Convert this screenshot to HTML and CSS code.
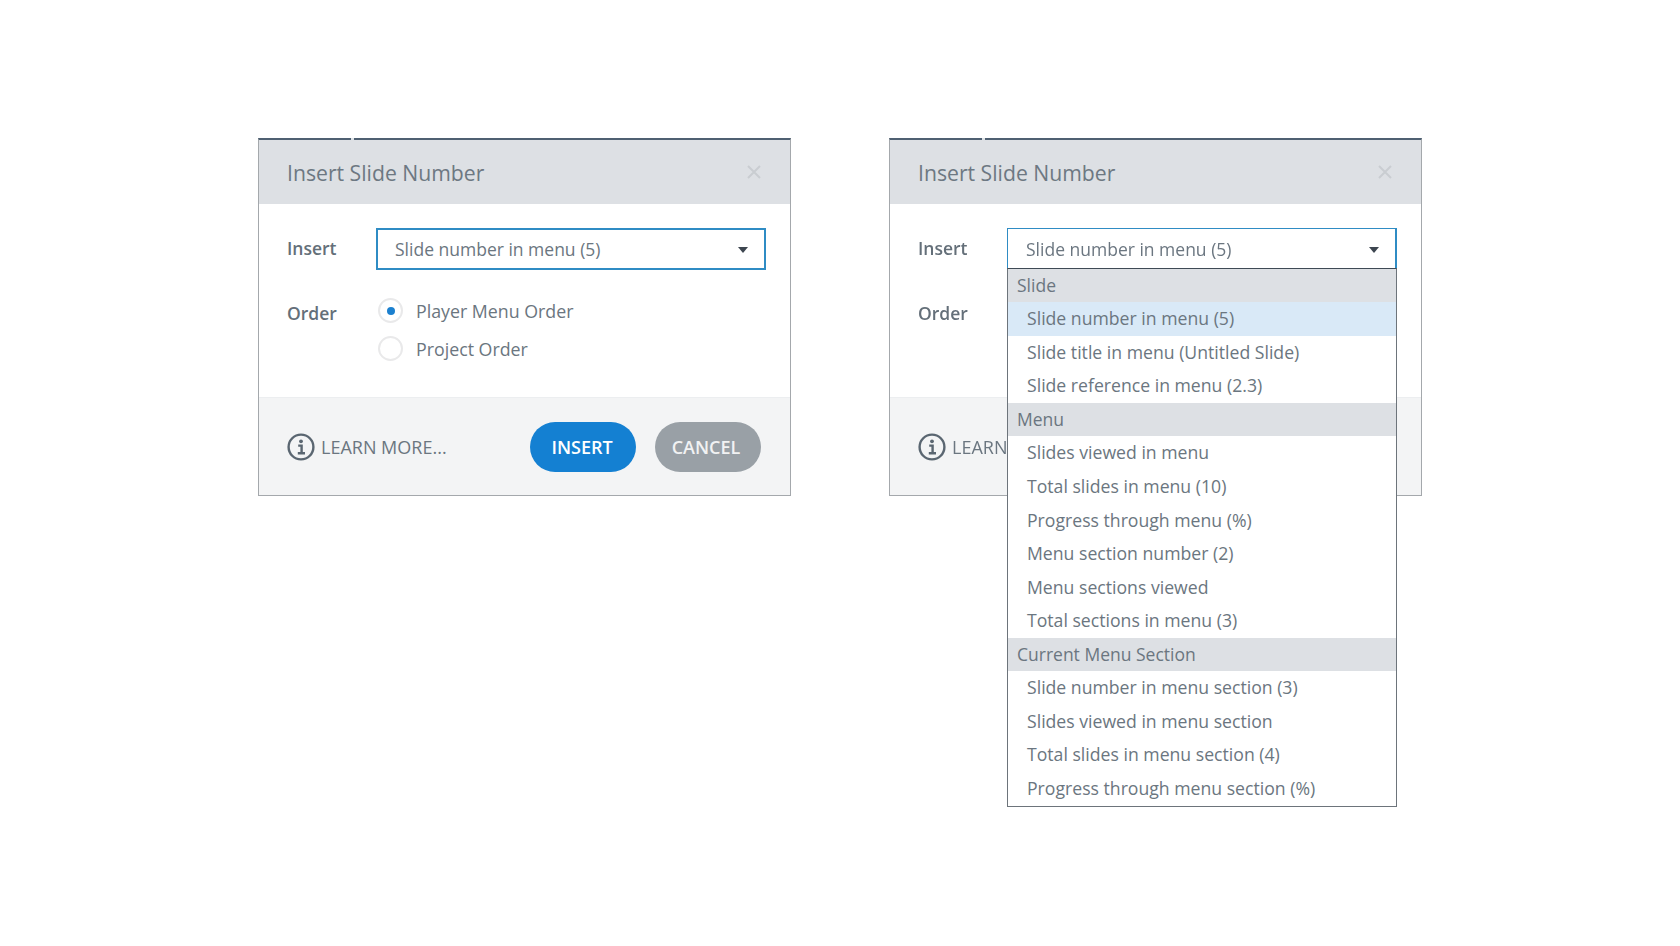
FILE: index.html
```html
<!DOCTYPE html>
<html lang="en">
<head>
  <meta charset="UTF-8">
  <title>Insert Slide Number</title>
  <link rel="stylesheet" href="styles.css">
</head>
<body>
  <div class="page">
    <!-- closed state -->
    <div class="dialog">
      <div class="dialog-head">
        <span class="dialog-title">Insert Slide Number</span>
        <svg class="close" width="14" height="14" viewBox="0 0 14 14"><path d="M1 1l12 12M13 1L1 13"/></svg>
      </div>
      <div class="dialog-body">
        <div class="row">
          <span class="label">Insert</span>
          <div class="select">
            <span>Slide number in menu (5)</span>
            <span class="caret"></span>
          </div>
        </div>
        <div class="row order-row">
          <span class="label">Order</span>
          <div class="radios">
            <div class="radio-row"><span class="radio checked"></span>Player Menu Order</div>
            <div class="radio-row"><span class="radio"></span>Project Order</div>
          </div>
        </div>
      </div>
      <div class="dialog-foot">
        <div class="learn">
          <svg class="info" width="28" height="28" viewBox="0 0 28 28"><circle cx="14" cy="14" r="12.4"/><path d="M11.2 12.6h3.4v7.6M10.8 20.2h7.2"/><circle class="dot" cx="14" cy="8.3" r="1.9"/></svg>
          <span>LEARN MORE...</span>
        </div>
        <div class="actions">
          <button class="btn insert">INSERT</button>
          <button class="btn cancel">CANCEL</button>
        </div>
      </div>
    </div>

    <!-- open state -->
    <div class="dialog">
      <div class="dialog-head">
        <span class="dialog-title">Insert Slide Number</span>
        <svg class="close" width="14" height="14" viewBox="0 0 14 14"><path d="M1 1l12 12M13 1L1 13"/></svg>
      </div>
      <div class="dialog-body">
        <div class="row">
          <span class="label">Insert</span>
          <div class="select open">
            <span>Slide number in menu (5)</span>
            <span class="caret"></span>
            <div class="menu">
              <div class="group">Slide</div>
              <div class="item active">Slide number in menu (5)</div>
              <div class="item">Slide title in menu (Untitled Slide)</div>
              <div class="item">Slide reference in menu (2.3)</div>
              <div class="group">Menu</div>
              <div class="item">Slides viewed in menu</div>
              <div class="item">Total slides in menu (10)</div>
              <div class="item">Progress through menu (%)</div>
              <div class="item">Menu section number (2)</div>
              <div class="item">Menu sections viewed</div>
              <div class="item">Total sections in menu (3)</div>
              <div class="group">Current Menu Section</div>
              <div class="item">Slide number in menu section (3)</div>
              <div class="item">Slides viewed in menu section</div>
              <div class="item">Total slides in menu section (4)</div>
              <div class="item">Progress through menu section (%)</div>
            </div>
          </div>
        </div>
        <div class="row order-row">
          <span class="label">Order</span>
        </div>
      </div>
      <div class="dialog-foot">
        <div class="learn">
          <svg class="info" width="28" height="28" viewBox="0 0 28 28"><circle cx="14" cy="14" r="12.4"/><path d="M11.2 12.6h3.4v7.6M10.8 20.2h7.2"/><circle class="dot" cx="14" cy="8.3" r="1.9"/></svg>
          <span>LEARN</span>
        </div>
      </div>
    </div>
  </div>
</body>
</html>
```

FILE: styles.css
```css
body {
  margin: 0;
  background-color: #ffffff;
  font-family: "Open Sans", "Liberation Sans", sans-serif;
  color: #6b7680;
}

/* the screenshot is a soft, compressed capture */
.page {
  display: flex;
  gap: 98px;
  height: 946px;
  box-sizing: border-box;
  padding: 138px 0 0 258px;
  filter: blur(0.4px);
}

.dialog {
  position: relative;
  width: 533px;
  height: 358px;
  box-sizing: border-box;
  display: flex;
  flex-direction: column;
  border: 1px solid #a4a8ac;
  border-top: 2px solid #4f6072;
  background-color: #ffffff;
}

/* small nick in the top border */
.dialog::before {
  content: "";
  position: absolute;
  top: -2px;
  left: 92px;
  width: 3px;
  height: 2px;
  background-color: #dfe3e6;
}

.dialog-head {
  height: 64px;
  flex: none;
  display: flex;
  justify-content: space-between;
  align-items: center;
  padding: 0 29px 0 28px;
  background-color: #dde0e4;
}

.dialog-title {
  font-size: 21.2px;
  color: #6d7882;
}

.close {
  fill: none;
  stroke: #c9cdd1;
  stroke-width: 2;
}

.dialog-body {
  flex: 1;
  padding: 24px 24px 0 28px;
}

.row {
  display: flex;
  align-items: center;
}

.label {
  width: 89px;
  flex: none;
  font-size: 17.5px;
  font-weight: 600;
  color: #646f79;
  position: relative;
  top: -1px;
}

.select {
  position: relative;
  width: 390px;
  height: 42px;
  box-sizing: border-box;
  display: flex;
  justify-content: space-between;
  align-items: center;
  padding: 0 16px 0 17px;
  border: 2px solid #2f8cc4;
  font-size: 17.5px;
  color: #6b7680;
}

.select.open {
  border-width: 1px 2px 0 1px;
  padding: 0 16px 2px 18px;
}

.caret {
  width: 0;
  height: 0;
  margin-top: 2px;
  border-left: 5.5px solid transparent;
  border-right: 5.5px solid transparent;
  border-top: 6px solid #3d4650;
}

.menu {
  position: absolute;
  top: 39px;
  left: -1px;
  width: 390px;
  box-sizing: border-box;
  background-color: #ffffff;
  border: 1px solid #6d747b;
  border-top-color: #3f4a55;
  font-size: 17.65px;
}

.group {
  height: 33.25px;
  line-height: 33px;
  padding-left: 9px;
  background-color: #dde0e4;
  color: #6b7680;
  font-size: 17.5px;
}

.item {
  height: 33.62px;
  line-height: 33px;
  padding-left: 19px;
}

.item.active {
  background-color: #d9e9f7;
}

.order-row {
  align-items: flex-start;
  margin-top: 23px;
}

.order-row .label {
  margin-top: 9px;
}

.radios {
  display: flex;
  flex-direction: column;
  gap: 11px;
  padding: 4px 0 0 2px;
}

.radio-row {
  display: flex;
  align-items: center;
  gap: 13px;
  height: 27px;
  font-size: 17.8px;
}

.radio {
  width: 25px;
  height: 25px;
  box-sizing: border-box;
  display: flex;
  justify-content: center;
  align-items: center;
  border: 2px solid #e9e9ea;
  border-radius: 50%;
}

.radio.checked::after {
  content: "";
  width: 8px;
  height: 8px;
  border-radius: 50%;
  background-color: #1b80cf;
}

.dialog-foot {
  height: 98px;
  flex: none;
  display: flex;
  justify-content: space-between;
  align-items: center;
  padding: 0 29px 0 28px;
  background-color: #f3f4f5;
  border-top: 1px solid #eceef0;
  box-sizing: border-box;
}

.learn {
  display: flex;
  align-items: center;
  gap: 6px;
  font-size: 18px;
  color: #6b7680;
}

.info {
  fill: none;
  stroke: #5a6671;
  stroke-width: 2.4;
}

.info .dot {
  fill: #5a6671;
  stroke: none;
}

.actions {
  display: flex;
  gap: 19px;
}

.btn {
  width: 106px;
  height: 50px;
  padding: 0 2px 0 0;
  border: none;
  border-radius: 25px;
  font-family: inherit;
  font-size: 18px;
  font-weight: 600;
  color: #ffffff;
  cursor: pointer;
}

.btn.insert {
  background-color: #1480d2;
}

.btn.cancel {
  padding-right: 4px;
  background-color: #99a0a6;
  color: #f1f2f3;
}
```
